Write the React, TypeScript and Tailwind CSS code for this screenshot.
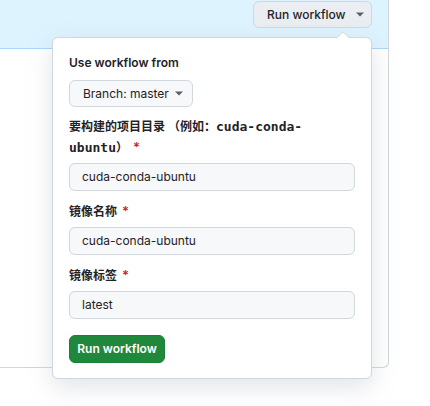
import React from "react";

const SANS = "font-['Inter','Noto_Sans_CJK_SC',sans-serif]";

function Caret({ className = "" }: { className?: string }) {
  return (
    <svg width="8" height="5" viewBox="0 0 8 5" className={className}>
      <path d="M0 0.5 L8 0.5 L4 4.5 Z" fill="#57606a" />
    </svg>
  );
}

function Field({ label, value, children }: { label?: string; value: string; children?: React.ReactNode }) {
  return (
    <div className="mt-[10px]">
      <div className="text-[12px] leading-[20px] font-semibold text-[#1f2328] [text-spacing-trim:space-all]">
        {children ?? label}
        <span className="text-[#cf222e] ml-[5px] text-[13px]">*</span>
      </div>
      <div className="mt-[5px] h-[28px] w-[286px] rounded-[6px] border border-[#d0d7de] bg-[#f6f8fa] px-[12px] flex items-center text-[12px] text-[#1f2328]">
        {value}
      </div>
    </div>
  );
}

export default function App() {
  return (
    <div className={`relative w-[430px] h-[406px] bg-white overflow-hidden ${SANS}`}>
      <div className="w-[389px] h-[368px] border-r border-b border-[#d0d7de] rounded-br-[6px]">
        <div className="h-[49px] bg-[#ddf4ff] border-b border-[#a8d5fb] flex justify-end pr-[16px] pt-[1px]">
          <div className="h-[27px] w-[119px] rounded-[6px] border border-[#d0d7de] bg-[#eaeef2] flex items-center pl-[13px] gap-[10px] text-[12px] font-medium text-[#1f2328]">
            <span>Run workflow</span>
            <Caret />
          </div>
        </div>
      </div>

      <div className="absolute left-[52px] top-[37px] w-[320px] rounded-[6px] border border-[#d0d7de] bg-white pt-[16px] pb-[15px] px-[16px] shadow-[0_8px_24px_rgba(140,149,159,0.25)]">
        <svg className="absolute left-[283px] top-[-7px]" width="14" height="8" viewBox="0 0 14 8">
          <path d="M0 7.5 L7 0.8 L14 7.5" fill="white" stroke="#d0d7de" strokeWidth="1" />
          <rect x="0" y="7" width="14" height="2" fill="white" />
        </svg>
        <div className="text-[12px] leading-[18px] font-semibold text-[#1f2328]">Use workflow from</div>
        <div className="mt-[8px] h-[27px] w-[124px] rounded-[6px] border border-[#d0d7de] bg-[#f6f8fa] flex items-center pl-[13px] gap-[6px] text-[12px] text-[#1f2328]">
          <span>Branch: master</span>
          <Caret />
        </div>
        <div className="mt-[2px]">
          <Field value="cuda-conda-ubuntu">
            要构建的项目目录 （例如：
            <span className="font-['DejaVu_Sans_Mono',monospace] font-bold text-[13px]">cuda-conda-</span>
            <br />
            <span className="font-['DejaVu_Sans_Mono',monospace] font-bold text-[13px]">ubuntu</span>）
          </Field>
        </div>
        <Field label="镜像名称" value="cuda-conda-ubuntu" />
        <Field label="镜像标签" value="latest" />
        <div className="mt-[16px] h-[28px] w-[96px] rounded-[6px] bg-[#1f883d] border border-[#1a7f37] flex items-center justify-center text-[12px] font-semibold text-white">
          Run workflow
        </div>
      </div>
    </div>
  );
}
